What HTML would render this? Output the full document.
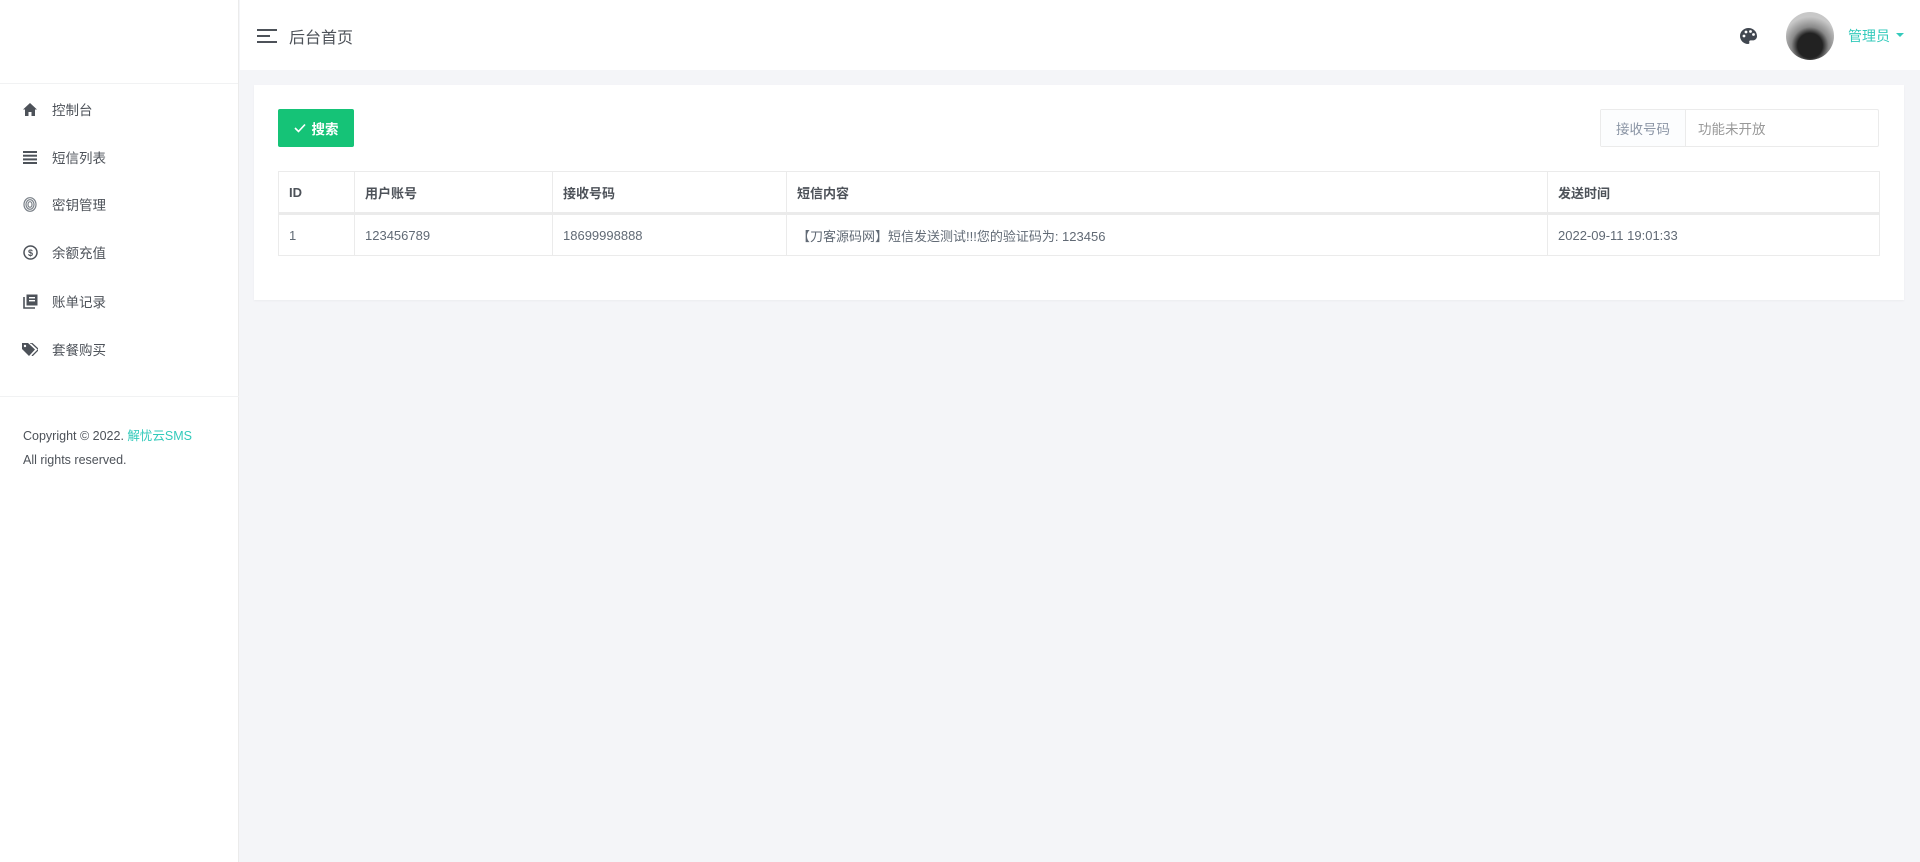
<!DOCTYPE html>
<html><head><meta charset="utf-8"><style>
*{margin:0;padding:0;box-sizing:border-box}
body{width:1920px;height:862px;background:#f4f5f8;font-family:"Liberation Sans","Noto Sans CJK SC",sans-serif;color:#4d5259;font-size:13px;position:relative;overflow:hidden}
.side{position:absolute;left:0;top:0;width:239px;height:862px;background:#fff;border-right:1px solid #ebebeb}
.side .top{height:84px;border-bottom:1px solid #f1f2f3}
.mi{position:absolute;left:0;height:20px;display:flex;align-items:center;font-size:13.5px;color:#4d5259}
.mi .ic{width:16px;height:16px;margin-left:22px;margin-right:14px;display:flex;align-items:center;justify-content:center}
.div2{position:absolute;left:0;top:396px;width:239px;border-top:1px solid #f1f2f3}
.copy{position:absolute;left:23px;top:424px;font-size:12.5px;line-height:24px;color:#4d5259}
.copy span{color:#33cabb}
.hdr{position:absolute;left:240px;top:0;right:0;height:70px;background:#fff}
.card{position:absolute;left:254px;top:85px;width:1650px;height:215px;background:#fff;box-shadow:0 1px 2px rgba(0,0,0,.04)}
.btn{position:absolute;left:24px;top:24px;width:76px;height:38px;background:#15c377;border-radius:2px;color:#fff;font-size:13.5px;font-weight:bold;display:flex;align-items:center;justify-content:center}
.ig{position:absolute;left:1346px;top:24px;width:279px;height:38px;border:1px solid #ebebeb;border-radius:2px;display:flex;font-size:13.5px}
.ig .l{width:85px;background:#fcfdfe;border-right:1px solid #ebebeb;color:#8b95a5;display:flex;align-items:center;justify-content:center}
.ig .r{padding-left:12px;color:#999;display:flex;align-items:center}
table{position:absolute;left:24px;top:86px;width:1602px;border-collapse:collapse;font-size:13px}
td,th{border:1px solid #ebebeb;padding:0 10px;text-align:left;height:42px}
th{font-weight:bold;color:#4d5259;border-bottom:3px solid #ebebeb}
td{color:#616a75}
</style></head><body>
<div class="side"><div class="top"></div>
<div class="mi" style="top:99px"><div class="ic"><svg width="14" height="13" viewBox="0 0 14 13"><path d="M7 0L0 6.5h2V13h3.5V9h3v4H12V6.5h2z" fill="#4d5259"/></svg></div>控制台</div>
<div class="mi" style="top:147px"><div class="ic"><svg width="14" height="13"><g fill="#4d5259"><rect y="0" width="14" height="2"/><rect y="3.7" width="14" height="2"/><rect y="7.4" width="14" height="2"/><rect y="11" width="14" height="2"/></g></svg></div>短信列表</div>
<div class="mi" style="top:194px"><div class="ic"><svg width="14" height="15" viewBox="0 0 14 15" fill="none" stroke="#7a8088" stroke-width="1.2"><ellipse cx="7" cy="7.5" rx="6" ry="6.8"/><ellipse cx="7" cy="7.5" rx="4" ry="4.8"/><ellipse cx="7" cy="7.5" rx="2" ry="2.8"/></svg></div>密钥管理</div>
<div class="mi" style="top:242px"><div class="ic"><svg width="15" height="15"><circle cx="7.5" cy="7.5" r="6.5" fill="none" stroke="#4d5259" stroke-width="1.5"/><text x="7.5" y="11" font-size="9" font-weight="bold" text-anchor="middle" fill="#4d5259" font-family="Liberation Sans">$</text></svg></div>余额充值</div>
<div class="mi" style="top:291px"><div class="ic"><svg width="15" height="15"><path d="M1 3v11h11" fill="none" stroke="#4d5259" stroke-width="1.6"/><rect x="3.5" y="0.5" width="11" height="11" fill="#4d5259"/><rect x="6" y="3" width="6" height="1.4" fill="#fff"/><rect x="6" y="6" width="6" height="1.4" fill="#fff"/></svg></div>账单记录</div>
<div class="mi" style="top:339px"><div class="ic"><svg width="16" height="13"><path d="M0 0h6l7 6.5L7 13 0 6z" fill="#4d5259"/><path d="M8 0h1.5l7 6.5L10 13" fill="none" stroke="#4d5259" stroke-width="1.3"/><circle cx="3" cy="3" r="1.2" fill="#fff"/></svg></div>套餐购买</div>
<div class="div2"></div>
<div class="copy">Copyright © 2022. <span>解忧云SMS</span><br>All rights reserved.</div>
</div>
<div class="hdr">
<svg style="position:absolute;left:17px;top:29px" width="20" height="14"><g fill="#4d5259"><rect width="20" height="2"/><rect y="6" width="13" height="2"/><rect y="12" width="20" height="2"/></g></svg>
<div style="position:absolute;left:49px;top:24px;font-size:16px;color:#4d5259">后台首页</div>
<svg style="position:absolute;left:1500px;top:28px" width="17" height="16" viewBox="0 0 17 16"><path d="M8.5 0C3.8 0 0 3.5 0 8s3.8 8 8 8c1.2 0 1.6-.8 1.3-1.6-.4-1 .2-2 1.4-2h2c2.3 0 4.3-1.8 4.3-4.2C17 3.5 13.2 0 8.5 0z" fill="#414750"/><circle cx="4" cy="8" r="1.4" fill="#fff"/><circle cx="6" cy="4" r="1.4" fill="#fff"/><circle cx="10.5" cy="3.5" r="1.4" fill="#fff"/><circle cx="13.5" cy="6.5" r="1.4" fill="#fff"/></svg>
<div style="position:absolute;left:1546px;top:12px;width:48px;height:48px;border-radius:50%;background:radial-gradient(circle at 50% 70%,#222 0 30%,#888 45%,#c8c8c8 70%)"></div>
<div style="position:absolute;left:1608px;top:26px;font-size:14px;color:#33cabb">管理员</div>
<div style="position:absolute;left:1656px;top:33px;border-left:4px solid transparent;border-right:4px solid transparent;border-top:4px solid #33cabb"></div>
</div>
<div class="card">
<div class="btn"><svg width="12" height="10" style="margin-right:6px"><path d="M1 5l3.5 3.5L11 1.5" fill="none" stroke="#fff" stroke-width="1.6"/></svg>搜索</div>
<div class="ig"><div class="l">接收号码</div><div class="r">功能未开放</div></div>
<table>
<tr><th style="width:76px">ID</th><th style="width:198px">用户账号</th><th style="width:234px">接收号码</th><th style="width:761px">短信内容</th><th>发送时间</th></tr>
<tr><td>1</td><td>123456789</td><td>18699998888</td><td>【刀客源码网】短信发送测试!!!您的验证码为: 123456</td><td>2022-09-11 19:01:33</td></tr>
</table>
</div>
</body></html>
